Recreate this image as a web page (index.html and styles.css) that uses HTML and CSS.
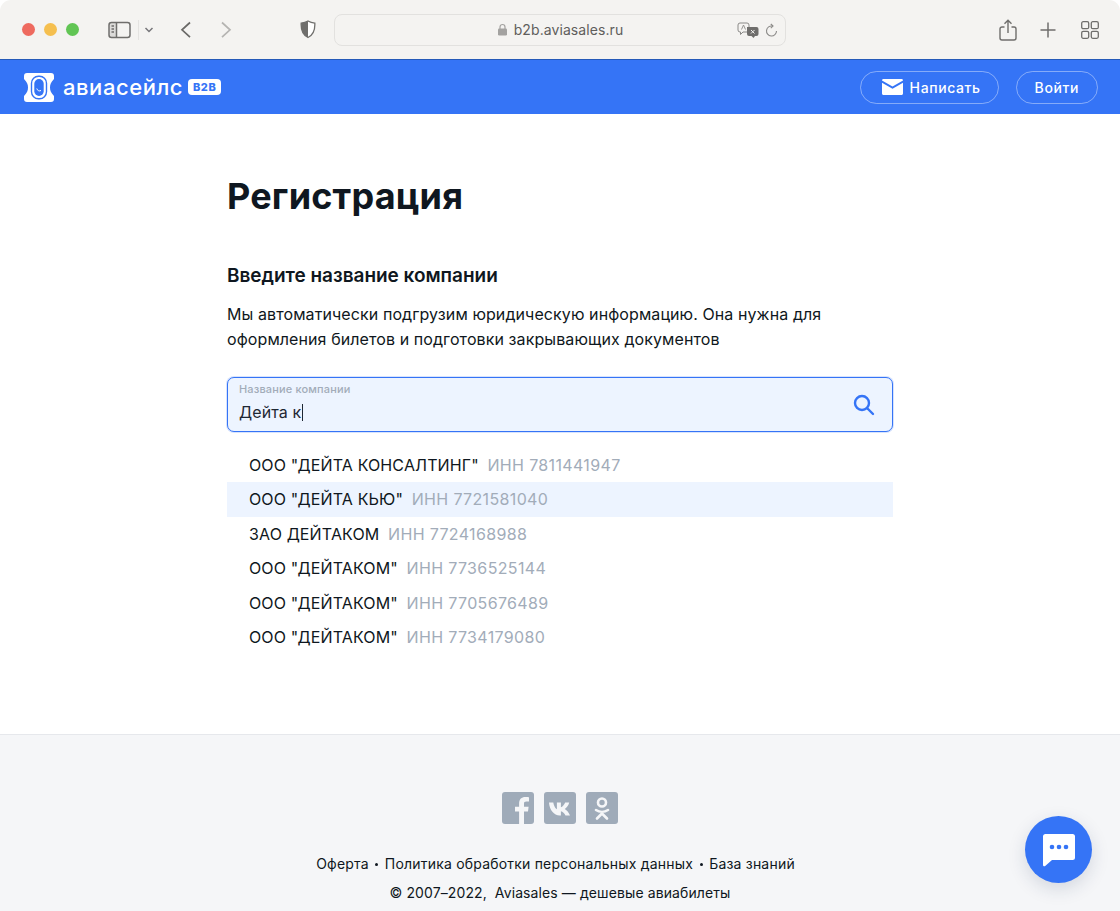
FILE: index.html
```html
<!DOCTYPE html>
<html lang="ru">
<head>
    <meta charset="UTF-8">
    <meta name="viewport" content="width=device-width, initial-scale=1.0">
    <title>Регистрация</title>
    <link rel="stylesheet" href="styles.css">
</head>
<body>
    <div class="window">
        <div class="toolbar">
            <div class="lights">
                <span class="light red"></span>
                <span class="light yellow"></span>
                <span class="light green"></span>
            </div>
            <svg class="tb-sidebar" width="24" height="18" viewBox="0 0 24 18" fill="none" stroke="#6f6e6c" stroke-width="1.5">
                <path d="M3.500 1.500h5v15h-5a2.500 2.500 0 0 1-2.500-2.500V4a2.500 2.500 0 0 1 2.500-2.500z" fill="#dcdbd9" stroke="none"/>
                <rect x="1" y="1.500" width="21" height="15" rx="2.500"/>
                <path d="M8.500 1.500v15M3.500 5h2.500M3.500 8h2.500M3.500 11h2.500"/>
            </svg>
            <span class="tb-divider"></span>
            <svg class="tb-chevron" width="10" height="6" viewBox="0 0 10 6" fill="none" stroke="#77767a" stroke-width="1.5"><path d="M1.500 1l3.500 3.500L8.500 1"/></svg>
            <svg class="tb-back" width="12" height="18" viewBox="0 0 12 18" fill="none" stroke="#6a6967" stroke-width="1.7"><path d="M10 1.500L2 8.800l8 7.400"/></svg>
            <svg class="tb-forward" width="12" height="18" viewBox="0 0 12 18" fill="none" stroke="#b5b4b2" stroke-width="1.7"><path d="M2 1.500l8 7.300-8 7.400"/></svg>
            <svg class="tb-shield" width="16" height="19" viewBox="0 0 16 19">
                <path d="M8 1c2 1.200 4.300 1.900 6.800 2.100.4 6.800-1.800 11.900-6.800 14.400C3 15 .8 9.900 1.200 3.100 3.700 2.900 6 2.200 8 1z" fill="#fff" stroke="#6f6e6c" stroke-width="1.300"/>
                <path d="M8 1C6 2.200 3.700 2.900 1.200 3.100.8 9.900 3 15 8 17.500z" fill="#6f6e6c"/>
            </svg>
            <div class="address">
                <svg width="11" height="13" viewBox="0 0 11 13"><path d="M3 6V4a2.500 2.500 0 0 1 5 0v2" fill="none" stroke="#a3a2a0" stroke-width="1.200"/><rect x="1" y="5.500" width="9" height="7" rx="1.300" fill="#a3a2a0"/></svg>
                <span class="address-text">b2b.aviasales.ru</span>
                <svg class="addr-translate" width="22" height="16" viewBox="0 0 22 16">
                    <path d="M3 1h7a2 2 0 0 1 2 2v5a2 2 0 0 1-2 2H6l-2.500 2.500V10H3a2 2 0 0 1-2-2V3a2 2 0 0 1 2-2z" fill="none" stroke="#8b8a88" stroke-width="1"/>
                    <path d="M10 5h9.500a2 2 0 0 1 2 2v5a2 2 0 0 1-2 2H18l-1.500 2-2-2H12a2 2 0 0 1-2-2z" fill="#6f6e6c"/>
                    <path d="M14 8l3.500 3.500M17.500 8L14 11.500" stroke="#f4f3f1" stroke-width="1"/>
                    <path d="M4.500 7.500L6.500 3l2 4.500" fill="none" stroke="#8b8a88" stroke-width=".9"/>
                </svg>
                <svg class="addr-reload" width="13" height="15" viewBox="0 0 13 15" fill="none" stroke="#8b8a88" stroke-width="1.100">
                    <path d="M7.500 3.100A5 5 0 1 0 11.500 8"/>
                    <path d="M5.800 1l2.200 2.100-2.200 2"/>
                </svg>
            </div>
            <svg class="tb-share" width="18" height="22" viewBox="0 0 18 22" fill="none" stroke="#6f6e6c" stroke-width="1.400">
                <path d="M5.500 8H3a2 2 0 0 0-2 2v9a2 2 0 0 0 2 2h12a2 2 0 0 0 2-2v-9a2 2 0 0 0-2-2h-2.500"/>
                <path d="M9 14V1.500M5.500 4.800L9 1.300l3.500 3.500"/>
            </svg>
            <svg class="tb-plus" width="16" height="16" viewBox="0 0 16 16" stroke="#6f6e6c" stroke-width="1.500"><path d="M8 .5v15M.5 8h15"/></svg>
            <svg class="tb-tabs" width="18" height="18" viewBox="0 0 18 18" fill="none" stroke="#6f6e6c" stroke-width="1.300">
                <rect x=".7" y=".7" width="7" height="7" rx="1.500"/>
                <rect x="10.300" y=".7" width="7" height="7" rx="1.500"/>
                <rect x=".7" y="10.300" width="7" height="7" rx="1.500"/>
                <rect x="10.300" y="10.300" width="7" height="7" rx="1.500"/>
            </svg>
        </div>

        <header class="topbar">
            <div class="brand">
                <svg class="brand-icon" width="30" height="29" viewBox="0 0 30 29">
                    <path d="M3 0h24a3 3 0 0 1 3 3v3c-3 3-4 5.500-4 8.500s1 5.500 4 8.500v3a3 3 0 0 1-3 3H3a3 3 0 0 1-3-3v-3c3-3 4-5.500 4-8.500S3 9 0 6V3a3 3 0 0 1 3-3z" fill="#fff"/>
                    <rect x="7.500" y="3.300" width="15" height="22.400" rx="7" fill="none" stroke="#3574f6" stroke-width="1.400"/>
                    <rect x="10.300" y="6" width="9.400" height="17" rx="4.700" fill="#3574f6"/>
                    <path d="M12.800 15.500c.4 2 2.400 3 4.200 2" fill="none" stroke="#fff" stroke-width="1"/>
                </svg>
                <span class="brand-name">авиасейлс</span>
                <span class="brand-badge">B2B</span>
            </div>
            <div class="topbar-actions">
                <a class="pill pill-write" href="#">
                    <svg width="21" height="16" viewBox="0 0 21 16" fill="#fff">
                        <path d="M1.500 0h18c.8 0 1.500.6 1.500 1.400l-10.500 6L0 1.400C0 .6.700 0 1.500 0z"/>
                        <path d="M0 3.700l10.500 6 10.500-6v10.800c0 .8-.7 1.500-1.500 1.500h-18C.7 16 0 15.300 0 14.500z"/>
                    </svg>
                    Написать
                </a>
                <a class="pill" href="#">Войти</a>
            </div>
        </header>

        <main class="content">
            <h1>Регистрация</h1>
            <h2>Введите название компании</h2>
            <p class="lead">Мы автоматически подгрузим юридическую информацию. Она нужна для оформления билетов и подготовки закрывающих документов</p>

            <div class="search-field">
                <div class="search-text">
                    <div class="search-label">Название компании</div>
                    <div class="search-value">Дейта к<span class="caret"></span></div>
                </div>
                <svg width="22" height="22" viewBox="0 0 22 22" fill="none" stroke="#3574f6" stroke-width="2.400" stroke-linecap="round">
                    <circle cx="9" cy="9" r="7"/>
                    <path d="M14.500 14.500l5.500 5.500"/>
                </svg>
            </div>

            <ul class="suggest">
                <li>ООО "ДЕЙТА КОНСАЛТИНГ" <span class="inn">ИНН 7811441947</span></li>
                <li class="active">ООО "ДЕЙТА КЬЮ" <span class="inn">ИНН 7721581040</span></li>
                <li>ЗАО ДЕЙТАКОМ <span class="inn">ИНН 7724168988</span></li>
                <li>ООО "ДЕЙТАКОМ" <span class="inn">ИНН 7736525144</span></li>
                <li>ООО "ДЕЙТАКОМ" <span class="inn">ИНН 7705676489</span></li>
                <li>ООО "ДЕЙТАКОМ" <span class="inn">ИНН 7734179080</span></li>
            </ul>
        </main>

        <footer class="footer">
            <div class="socials">
                <a class="social" href="#">
                    <svg width="32" height="32" viewBox="0 0 32 32"><rect width="32" height="32" rx="3" fill="#9fabb9"/><path d="M22 32V19.500h4l.6-4.800H22v-3c0-1.400.4-2.300 2.400-2.300H27V5.200c-.5-.1-2-.2-3.700-.2-3.700 0-6.200 2.200-6.200 6.400v3.300H13v4.800h4.100V32z" fill="#f5f6f8"/></svg>
                </a>
                <a class="social" href="#">
                    <svg width="32" height="32" viewBox="0 0 32 32"><rect width="32" height="32" rx="3" fill="#9fabb9"/><path d="M5 10.500h4.300c.4 2.400 1.900 6 3.600 6.800v-6.800h4v4.800c1.500-.4 3.500-2.800 4.300-4.800h4c-.6 3-3 5.500-4.500 6.500 1.700.9 4 3 5.300 6.500h-4.500c-.9-2.300-2.800-4-4.600-4.300v4.300h-1.200C10 23 5.500 18.500 5 10.500z" fill="#f5f6f8"/></svg>
                </a>
                <a class="social" href="#">
                    <svg width="32" height="32" viewBox="0 0 32 32"><rect width="32" height="32" rx="3" fill="#9fabb9"/><circle cx="16" cy="10.500" r="4" fill="none" stroke="#f5f6f8" stroke-width="2.600"/><path d="M10 18c3.500 2.400 8.500 2.400 12 0M16 20v2M16 21.500l-5 5M16 21.500l5 5" fill="none" stroke="#f5f6f8" stroke-width="2.600" stroke-linecap="round"/></svg>
                </a>
            </div>
            <nav class="footer-links">
                <a href="#">Оферта</a>
                <span class="dot"></span>
                <a href="#">Политика обработки персональных данных</a>
                <span class="dot"></span>
                <a href="#">База знаний</a>
            </nav>
            <div class="copyright">© 2007–2022,&nbsp; Aviasales — дешевые авиабилеты</div>
        </footer>

        <button class="chat-btn" type="button" aria-label="Чат">
            <svg width="34" height="34" viewBox="0 0 34 34">
                <path d="M3.500 1h27A2.500 2.500 0 0 1 33 3.500v21a2.500 2.500 0 0 1-2.500 2.500H10l-6.800 6c-1 .6-2.200 0-2.200-1V3.500A2.500 2.500 0 0 1 3.500 1z" fill="#fff"/>
                <circle cx="10" cy="14" r="2.300" fill="#3574f6"/>
                <circle cx="17" cy="14" r="2.300" fill="#3574f6"/>
                <circle cx="24" cy="14" r="2.300" fill="#3574f6"/>
            </svg>
        </button>
    </div>
</body>
</html>
```

FILE: styles.css
```css
* { box-sizing: border-box; }
html, body { margin: 0; height: 100%; }
body { font-family: Inter, "Liberation Sans", sans-serif; color: #0f1720; background: #fff; overflow: hidden; }
a { color: inherit; text-decoration: none; }

.window { position: relative; height: 911px; display: flex; flex-direction: column; border-radius: 11px 11px 0 0; overflow: hidden; background: #fff; }

/* browser bar */
.toolbar { height: 60px; flex: none; display: flex; align-items: center; padding-left: 22px; background: #f4f3f1; border-bottom: 1px solid #2459b8; }
.lights { display: flex; gap: 9px; }
.light { width: 13px; height: 13px; border-radius: 50%; }
.red { background: #ee6a5f; }
.yellow { background: #f5bf4f; }
.green { background: #61c554; }
.tb-sidebar { margin-left: 29px; }
.tb-divider { width: 1px; height: 20px; margin-left: 6px; background: #e4e3e1; }
.tb-chevron { margin-left: 5px; }
.tb-back { margin-left: 26px; }
.tb-forward { margin-left: 28px; }
.tb-shield { margin-left: 68px; }
.address { position: relative; width: 452px; height: 32px; margin-left: 18px; display: flex; align-items: center; justify-content: center; gap: 6px; background: #f4f3f1; border: 1px solid #e2e1df; border-radius: 8px; }
.address-text { font-size: 14px; letter-spacing: .08px; color: #5f5e5c; }
.addr-translate { position: absolute; right: 26px; top: 7px; }
.addr-reload { position: absolute; right: 7px; top: 8px; }
.tb-share { margin-left: 213px; }
.tb-plus { margin-left: 23px; }
.tb-tabs { margin-left: 25px; }

/* blue header */
.topbar { height: 54px; flex: none; display: flex; align-items: center; justify-content: space-between; padding: 0 22px 0 24px; background: #3574f6; }
.brand { display: flex; align-items: center; }
.brand-name { margin-left: 9px; font-size: 22px; font-weight: 500; line-height: 30px; color: #fff; letter-spacing: .55px; }
.brand-badge { margin-left: 5px; width: 33px; height: 16px; border-radius: 4px; background: #fff; color: #3574f6; font-size: 11px; font-weight: 800; line-height: 16px; text-align: center; letter-spacing: .6px; }
.topbar-actions { display: flex; gap: 17px; }
.pill { height: 33px; display: flex; align-items: center; gap: 7px; padding: 0 18px; border: 1px solid rgba(255,255,255,.4); border-radius: 17px; color: #fff; font-size: 14px; font-weight: 500; letter-spacing: .6px; }
.pill-write { padding: 0 17px 0 21px; }

/* form */
.content { flex: 1; width: 666px; margin-left: 227px; }
h1 { margin: 59px 0 0; font-size: 36px; line-height: 46px; font-weight: 700; letter-spacing: .2px; }
h2 { margin: 45px 0 0; font-size: 19px; line-height: 24px; font-weight: 600; letter-spacing: -.03px; }
.lead { margin: 14px 0 0; font-size: 16px; line-height: 25px; letter-spacing: .09px; }
.search-field { height: 55px; margin-top: 25px; display: flex; align-items: center; justify-content: space-between; padding: 0 17px 0 11px; background: #edf4ff; border: 1px solid #3574f6; border-radius: 7px; box-shadow: 0 0 0 1px rgba(53,116,246,.2); }
.search-text { align-self: flex-start; padding-top: 5px; }
.search-label { font-size: 11px; font-weight: 500; line-height: 13px; letter-spacing: .15px; color: #a2acb9; }
.search-value { margin-top: 6px; font-size: 16px; line-height: 21px; letter-spacing: .1px; color: #1e2733; }
.caret { display: inline-block; width: 1px; height: 17px; margin-left: 1px; vertical-align: -3px; background: #1e2733; }
.suggest { margin: 16px 0 0; padding: 0; list-style: none; }
.suggest li { height: 34.4px; padding-left: 22px; font-size: 16px; line-height: 34.4px; letter-spacing: .13px; white-space: pre-wrap; }
.suggest .active { background: #edf4ff; }
.inn { margin-left: 4px; letter-spacing: .35px; color: #a2acb9; }

/* footer */
.footer { height: 177px; flex: none; display: flex; flex-direction: column; align-items: center; padding-top: 57px; background: #f5f6f8; border-top: 1px solid #e6e8ec; }
.socials { display: flex; gap: 10px; }
.social { display: block; height: 32px; }
.footer-links { display: flex; align-items: center; gap: 6.500px; margin: 31px 9px 0 0; font-size: 14px; line-height: 18px; letter-spacing: .2px; }
.dot { width: 3px; height: 3px; border-radius: 50%; background: #0f1720; }
.copyright { margin-top: 11px; font-size: 14px; line-height: 18px; letter-spacing: .1px; }

.chat-btn { position: absolute; left: 1025px; top: 816px; width: 67px; height: 67px; display: flex; align-items: center; justify-content: center; padding: 0 0 0 1px; border: none; border-radius: 50%; background: #3574f6; box-shadow: 0 6px 18px rgba(30,50,90,.15); }
```
